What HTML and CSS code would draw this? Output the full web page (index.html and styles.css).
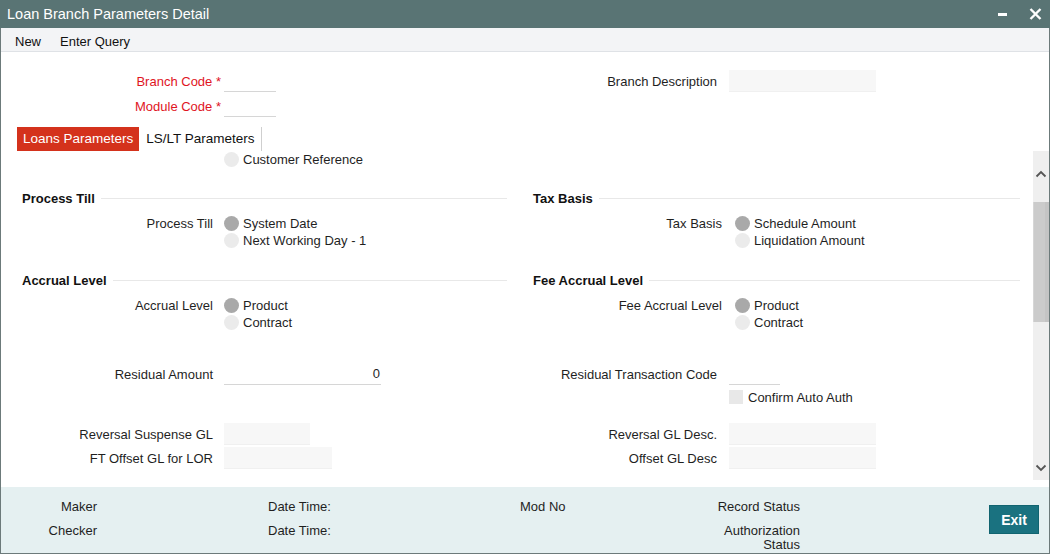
FILE: index.html
```html
<!DOCTYPE html>
<html>
<head>
<meta charset="utf-8">
<title>Loan Branch Parameters Detail</title>
<link rel="stylesheet" href="styles.css">
</head>
<body>
<div class="window">
  <div class="titlebar">
    <span class="title">Loan Branch Parameters Detail</span>
    <div class="win-ctrls">
      <span class="min"></span>
      <svg class="close" width="13" height="12" viewBox="0 0 13 12"><path d="M1.5 1 L11.5 11 M11.5 1 L1.5 11" stroke="#fff" stroke-width="2.4" fill="none"/></svg>
    </div>
  </div>
  <div class="menubar">
    <span class="menu-item">New</span>
    <span class="menu-item">Enter Query</span>
  </div>

  <div class="header band">
    <div class="col">
      <div class="hrow">
        <label class="hlabel req">Branch Code <span>*</span></label>
        <span class="uline w52"></span>
      </div>
      <div class="hrow">
        <label class="hlabel req">Module Code <span>*</span></label>
        <span class="uline w52"></span>
      </div>
    </div>
    <div class="col">
      <div class="frow right">
        <label class="flabel">Branch Description</label>
        <span class="box w147"></span>
      </div>
    </div>
  </div>

  <div class="tabs">
    <span class="tab active">Loans Parameters</span>
    <span class="tab">LS/LT Parameters</span>
  </div>

  <div class="body">
    <div class="content">
      <div class="band">
        <div class="rg">
          <span class="rlabel"></span>
          <div class="opts">
            <div class="opt"><span class="radio"></span>Customer Reference</div>
          </div>
        </div>
      </div>

      <div class="band sec-band">
        <div class="col">
          <div class="sec-head">Process Till</div>
          <div class="rg">
            <span class="rlabel">Process Till</span>
            <div class="opts">
              <div class="opt"><span class="radio on"></span>System Date</div>
              <div class="opt"><span class="radio"></span>Next Working Day - 1</div>
            </div>
          </div>
        </div>
        <div class="col">
          <div class="sec-head">Tax Basis</div>
          <div class="rg right">
            <span class="rlabel">Tax Basis</span>
            <div class="opts">
              <div class="opt"><span class="radio on"></span>Schedule Amount</div>
              <div class="opt"><span class="radio"></span>Liquidation Amount</div>
            </div>
          </div>
        </div>
      </div>

      <div class="band sec-band2">
        <div class="col">
          <div class="sec-head">Accrual Level</div>
          <div class="rg">
            <span class="rlabel">Accrual Level</span>
            <div class="opts">
              <div class="opt"><span class="radio on"></span>Product</div>
              <div class="opt"><span class="radio"></span>Contract</div>
            </div>
          </div>
        </div>
        <div class="col">
          <div class="sec-head">Fee Accrual Level</div>
          <div class="rg right">
            <span class="rlabel">Fee Accrual Level</span>
            <div class="opts">
              <div class="opt"><span class="radio on"></span>Product</div>
              <div class="opt"><span class="radio"></span>Contract</div>
            </div>
          </div>
        </div>
      </div>

      <div class="band residual">
        <div class="frow">
          <label class="flabel">Residual Amount</label>
          <span class="uline w157 num">0</span>
        </div>
        <div class="frow right">
          <label class="flabel">Residual Transaction Code</label>
          <span class="uline w51"></span>
        </div>
      </div>

      <div class="band chk-band">
        <div></div>
        <div class="frow right chkrow">
          <span class="flabel"></span>
          <div class="chk"><span class="checkbox"></span>Confirm Auto Auth</div>
        </div>
      </div>

      <div class="band gl1">
        <div class="frow">
          <label class="flabel">Reversal Suspense GL</label>
          <span class="box w86"></span>
        </div>
        <div class="frow right">
          <label class="flabel">Reversal GL Desc.</label>
          <span class="box w147"></span>
        </div>
      </div>

      <div class="band gl2">
        <div class="frow">
          <label class="flabel">FT Offset GL for LOR</label>
          <span class="box w108"></span>
        </div>
        <div class="frow right">
          <label class="flabel">Offset GL Desc</label>
          <span class="box w147"></span>
        </div>
      </div>
    </div>
    <div class="scrollbar">
      <svg class="arrow up" width="12" height="8" viewBox="0 0 12 8"><path d="M1.5 6.5 L6 2 L10.5 6.5" stroke="#555" stroke-width="1.8" fill="none"/></svg>
      <div class="thumb"></div>
      <svg class="arrow down" width="12" height="8" viewBox="0 0 12 8"><path d="M1.5 1.5 L6 6 L10.5 1.5" stroke="#555" stroke-width="1.8" fill="none"/></svg>
    </div>
  </div>

  <div class="footer">
    <div class="audit">
      <span class="alabel">Maker</span>
      <span></span>
      <span class="aval">Date Time:</span>
      <span class="aval">Mod No</span>
      <span class="alabel">Record Status</span>
      <span class="alabel">Checker</span>
      <span></span>
      <span class="aval">Date Time:</span>
      <span></span>
      <span class="alabel auth">Authorization Status</span>
    </div>
    <button class="exit">Exit</button>
  </div>
</div>
</body>
</html>
```

FILE: styles.css
```css
* { box-sizing: border-box; }
html, body { margin: 0; padding: 0; background: #fff; }
body {
  font-family: "Liberation Sans", Arial, sans-serif;
  font-size: 13px;
  color: #1f1f1f;
}
.window {
  width: 1050px;
  height: 554px;
  border-left: 1px solid #6c7a7a;
  border-right: 1px solid #6c7a7a;
  border-bottom: 1px solid #6c7a7a;
  background: #fff;
  display: flex;
  flex-direction: column;
}
.window > * { flex: none; }
.titlebar {
  height: 28px;
  background: #597474;
  color: #fff;
  display: flex;
  align-items: center;
  padding-left: 7px;
  margin: 0 -1px;
}
.title { font-size: 14.5px; }
.win-ctrls {
  margin-left: auto;
  display: flex;
  align-items: center;
  gap: 22px;
  padding-right: 8px;
}
.min {
  display: block;
  width: 9px;
  height: 3px;
  background: #fff;
  margin-top: 1px;
}
.close { display: block; }

.menubar {
  height: 24px;
  background: #f3f4f6;
  border-bottom: 1px solid #dfe2e6;
  display: flex;
  align-items: center;
  padding-left: 14px;
  padding-top: 3px;
  gap: 19px;
}
.menu-item { color: #111; }

.band {
  display: grid;
  grid-template-columns: 485px 487px;
  column-gap: 26px;
  padding-left: 21px;
}
.header {
  padding-top: 18px;
  padding-bottom: 7px;
}
.hrow {
  display: flex;
  align-items: center;
  height: 22px;
  margin-bottom: 3px;
}
.hlabel {
  width: 199px;
  text-align: right;
  margin-right: 3px;
}
.req { color: #e0141e; }
.req span { color: #e0141e; }

.frow {
  display: flex;
  align-items: center;
  height: 22px;
}
.flabel {
  width: 191px;
  text-align: right;
  margin-right: 11px;
  flex: none;
}
.frow.right .flabel {
  width: 184px;
  margin-right: 12px;
}
.uline {
  display: block;
  height: 22px;
  border-bottom: 1px solid #d6d6d6;
}
.num {
  text-align: right;
  line-height: 22px;
  padding-right: 1px;
}
.box {
  display: block;
  height: 22px;
  background: #f7f7f7;
  border-bottom: 1px solid #f0f0f0;
}
.w52 { width: 52px; }
.w51 { width: 51px; }
.w157 { width: 157px; }
.w147 { width: 147px; }
.w86 { width: 86px; }
.w108 { width: 108px; }

.tabs {
  display: flex;
  height: 24px;
  padding-left: 16px;
  line-height: 24px;
  font-size: 13.5px;
}
.tab {
  padding: 0 6px 0 7px;
  color: #111;
  border-right: 1px solid #cfcfcf;
}
.tab.active {
  background: #d4321c;
  color: #fff;
  border-right: none;
  padding: 0 6px;
}

.body {
  height: 329px;
  display: flex;
  overflow: hidden;
}
.content {
  flex: 1;
  overflow: hidden;
}
.scrollbar {
  width: 16px;
  background: #efefef;
  display: flex;
  flex-direction: column;
  align-items: center;
}
.arrow { display: block; margin-top: 19px; flex: none; }
.thumb {
  flex: none;
  width: 16px;
  height: 120px;
  margin-top: 24px;
  background: #cbcbcb;
  border-left: 1px solid #d6d6d6;
  border-right: 4px solid #c4c4c4;
}
.arrow.down { margin-top: auto; margin-bottom: 8px; }

.rg {
  display: flex;
  align-items: flex-start;
}
.rlabel {
  width: 191px;
  margin-right: 11px;
  text-align: right;
  line-height: 17px;
  flex: none;
}
.rg.right .rlabel {
  width: 189px;
  margin-right: 13px;
}
.opt {
  display: flex;
  align-items: center;
  height: 17px;
}
.radio {
  width: 15px;
  height: 15px;
  border-radius: 50%;
  background: #ebebeb;
  margin-right: 4px;
}
.radio.on { background: #a9a9a9; }

.sec-band { margin-top: 20px; }
.sec-band2 { margin-top: 21px; }
.sec-head {
  display: flex;
  align-items: center;
  height: 20px;
  font-weight: bold;
  color: #111;
  margin-bottom: 7px;
}
.sec-head::after {
  content: "";
  flex: 1;
  height: 1px;
  background: #e8e8e8;
  margin-left: 6px;
}
.residual { margin-top: 32px; }
.chk-band { margin-top: 4px; }
.chkrow { height: 16px; }
.chk {
  display: flex;
  align-items: center;
}
.checkbox {
  width: 14px;
  height: 14px;
  background: #e8e8e8;
  margin-right: 5px;
}
.gl1 { margin-top: 18px; }
.gl2 { margin-top: 2px; }

.footer {
  margin-top: 7px;
  flex: 1 1 auto;
  min-height: 0;
  background: #e5f0f1;
  display: flex;
  align-items: flex-start;
}
.audit {
  display: grid;
  grid-template-columns: 96px 171px 252px 186px 94px;
  row-gap: 10px;
  padding-top: 13px;
  line-height: 14px;
  color: #1f1f1f;
}
.alabel { text-align: right; white-space: nowrap; }
.alabel.auth { white-space: normal; padding-left: 10px; }
.exit {
  margin-left: auto;
  margin-right: 10px;
  margin-top: 18px;
  width: 50px;
  height: 29px;
  border: 1px solid #116470;
  background: #1a7280;
  color: #fff;
  font-family: "Liberation Sans", Arial, sans-serif;
  font-weight: bold;
  font-size: 14px;
  padding: 0;
}
```
